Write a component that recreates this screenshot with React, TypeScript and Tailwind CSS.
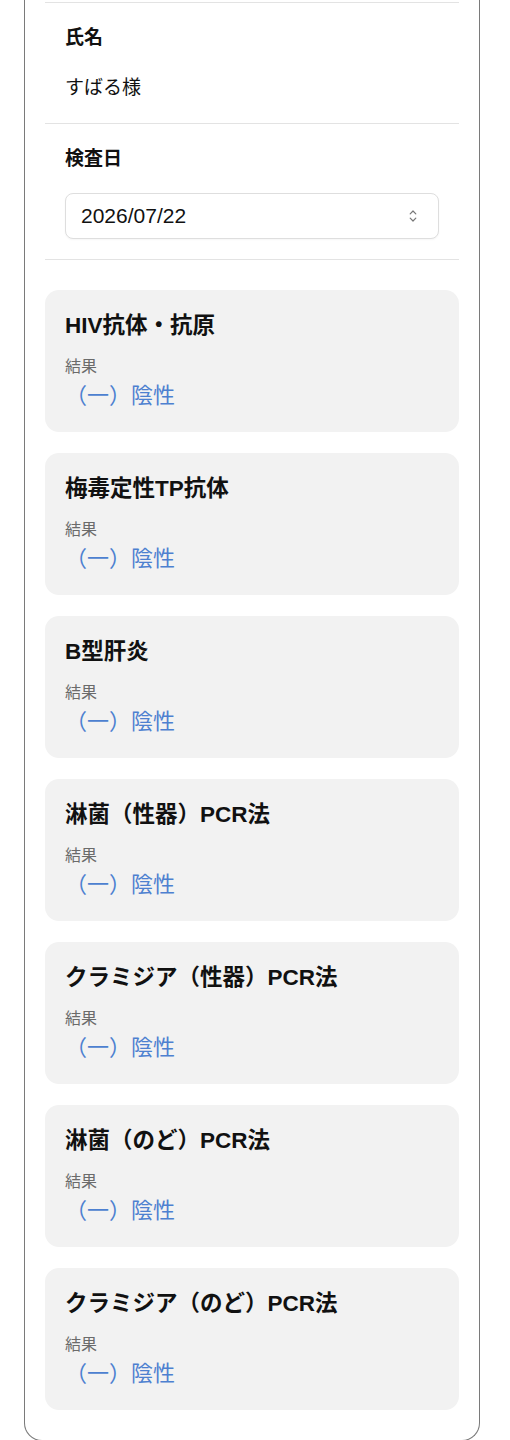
import { FC } from 'react';

type TestResult = {
  name: string;
  result: string;
};

const results: TestResult[] = [
  { name: 'HIV抗体・抗原', result: '（一）陰性' },
  { name: '梅毒定性TP抗体', result: '（一）陰性' },
  { name: 'B型肝炎', result: '（一）陰性' },
  { name: '淋菌（性器）PCR法', result: '（一）陰性' },
  { name: 'クラミジア（性器）PCR法', result: '（一）陰性' },
  { name: '淋菌（のど）PCR法', result: '（一）陰性' },
  { name: 'クラミジア（のど）PCR法', result: '（一）陰性' },
];

const font = {
  fontFamily: '"Liberation Sans", "Noto Sans CJK JP", sans-serif',
};

const SelectChevrons = () => (
  <svg width="8" height="14" viewBox="0 0 8 14" fill="none" stroke="#777" strokeWidth="1.2" strokeLinecap="round" strokeLinejoin="round">
    <path d="M1.2 4.8 L4 2 L6.8 4.8" />
    <path d="M1.2 9.2 L4 12 L6.8 9.2" />
  </svg>
);

const ResultCard: FC<TestResult> = ({ name, result }) => (
  <div className="rounded-[14px] bg-[#f2f2f2] px-[20px] pt-[21px] pb-[21px]">
    <h3 className="text-[22.5px] font-bold leading-[30px] text-[#111]">{name}</h3>
    <p className="mt-[15px] text-[16px] leading-[22px] text-[#6b6b6b]">結果</p>
    <p className="mt-[3px] text-[22px] leading-[30px] text-[#4d80d0]">{result}</p>
  </div>
);

const App: FC = () => {
  return (
    <div className="min-h-[1440px] bg-white" style={font}>
      <div className="ml-[24px] w-[456px] rounded-b-[18px] border-x border-b border-[#7a7a7a] px-[20px] pt-[2px] pb-[30px]">
        <div className="border-t border-[#e3e3e3]" />
        <section className="px-[20px] pt-[21px] pb-[21px]">
          <h2 className="text-[19px] font-bold leading-[28px] text-[#111]">氏名</h2>
          <p className="mt-[22px] text-[19px] leading-[28px] text-[#111]">すばる様</p>
        </section>
        <div className="border-t border-[#e3e3e3]" />
        <section className="px-[20px] pt-[21px] pb-[20px]">
          <h2 className="text-[19px] font-bold leading-[28px] text-[#111]">検査日</h2>
          <div className="mt-[20px] flex h-[46px] items-center justify-between rounded-[8px] border border-[#dedede] bg-white pl-[15px] pr-[21px] shadow-[0_1px_2px_rgba(0,0,0,0.04)]">
            <span className="text-[21px] leading-[28px] text-[#111]">2026/07/22</span>
            <SelectChevrons />
          </div>
        </section>
        <div className="border-t border-[#e3e3e3]" />
        <div className="mt-[30px] flex flex-col gap-[21px]">
          {results.map((r) => (
            <ResultCard key={r.name} name={r.name} result={r.result} />
          ))}
        </div>
      </div>
    </div>
  );
};

export default App;
